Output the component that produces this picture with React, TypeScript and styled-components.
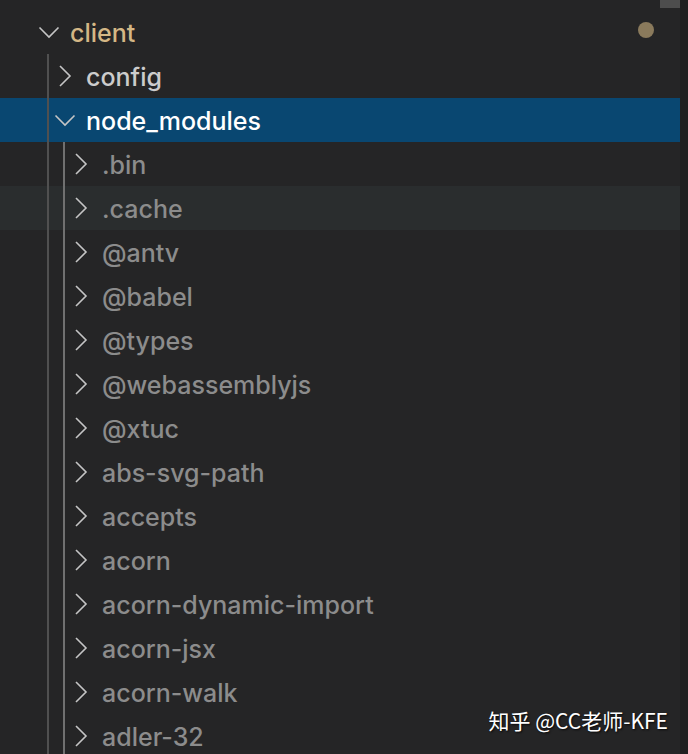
import styled, { createGlobalStyle } from 'styled-components';

const GlobalStyle = createGlobalStyle`
  html, body {
    margin: 0;
    padding: 0;
    background: #252526;
  }
  #root {
    width: 688px;
    height: 754px;
  }
`;

const children = [
  '.bin',
  '.cache',
  '@antv',
  '@babel',
  '@types',
  '@webassemblyjs',
  '@xtuc',
  'abs-svg-path',
  'accepts',
  'acorn',
  'acorn-dynamic-import',
  'acorn-jsx',
  'acorn-walk',
  'adler-32',
];

function Chevron({ open }: { open: boolean }) {
  return (
    <ChevronBox>
      <svg width="22" height="22" viewBox="0 0 22 22" fill="none">
        {open ? (
          <path d="M1.5 6.5 L11 16 L20.5 6.5" stroke="#c5c5c5" strokeWidth="1.6" />
        ) : (
          <path d="M6 1 L16 11 L6 21" stroke="#c5c5c5" strokeWidth="1.6" />
        )}
      </svg>
    </ChevronBox>
  );
}

export default function App() {
  return (
    <>
      <GlobalStyle />
      <Explorer>
        <Tree>
          <Row $depth={0}>
            <Chevron open />
            <Label $tone="modified">client</Label>
            <Dot />
          </Row>
          <Group $guide={47}>
            <Row $depth={1}>
              <Chevron open={false} />
              <Label $tone="normal">config</Label>
            </Row>
            <Row $depth={1} $selected>
              <Chevron open />
              <Label $tone="selected">node_modules</Label>
            </Row>
            <Group $guide={63} $active>
              {children.map((name) => (
                <Row key={name} $depth={2} $hover={name === '.cache'}>
                  <Chevron open={false} />
                  <Label $tone="ignored">{name}</Label>
                </Row>
              ))}
            </Group>
          </Group>
        </Tree>
        <ScrollTrack />
        <ScrollThumb />
        <Watermark>知乎 @CC老师-KFE</Watermark>
      </Explorer>
    </>
  );
}

const Explorer = styled.div`
  position: relative;
  display: flex;
  width: 688px;
  height: 754px;
  overflow: hidden;
  background: #252526;
  font-family: Inter, "Noto Sans", sans-serif;
`;

const Tree = styled.div`
  flex: 1;
  padding-top: 10px;
`;

const ScrollTrack = styled.div`
  width: 8px;
  background: #202020;
`;

const ScrollThumb = styled.div`
  position: absolute;
  top: 0;
  right: 8px;
  width: 20px;
  height: 8px;
  background: #4d4d4d;
`;

const Group = styled.div<{ $guide: number; $active?: boolean }>`
  position: relative;

  &::before {
    content: '';
    position: absolute;
    left: ${(p) => p.$guide}px;
    top: 0;
    bottom: 0;
    width: 1.5px;
    background: ${(p) => (p.$active ? '#707070' : '#505050')};
    z-index: 1;
  }
`;

const Row = styled.div<{ $depth: number; $selected?: boolean; $hover?: boolean }>`
  display: flex;
  align-items: center;
  height: 44px;
  padding-left: ${(p) => 38 + p.$depth * 16}px;
  padding-right: 26px;
  padding-top: 2px;
  box-sizing: border-box;
  background: ${(p) => (p.$selected ? '#094771' : p.$hover ? '#2a2d2e' : 'transparent')};
`;

const ChevronBox = styled.span`
  display: flex;
  align-items: center;
  justify-content: flex-start;
  width: 32px;
  height: 22px;
  margin-top: -2px;
  flex-shrink: 0;
`;

const toneColors = {
  modified: '#d4b785',
  normal: '#cccccc',
  selected: '#ffffff',
  ignored: '#8c8c8c',
};

const Label = styled.span<{ $tone: keyof typeof toneColors }>`
  flex: 1;
  font-size: 25px;
  font-weight: 500;
  color: ${(p) => toneColors[p.$tone]};
  white-space: nowrap;
`;

const Dot = styled.span`
  width: 16px;
  height: 16px;
  border-radius: 50%;
  background: #8a7a5c;
  margin-top: -6px;
`;

const Watermark = styled.div`
  position: absolute;
  right: 20px;
  top: 705px;
  font-family: "Noto Sans CJK SC", sans-serif;
  font-size: 21px;
  color: #ffffff;
  text-shadow: 1px 1px 2px rgba(0, 0, 0, 0.8);
  white-space: nowrap;
`;
